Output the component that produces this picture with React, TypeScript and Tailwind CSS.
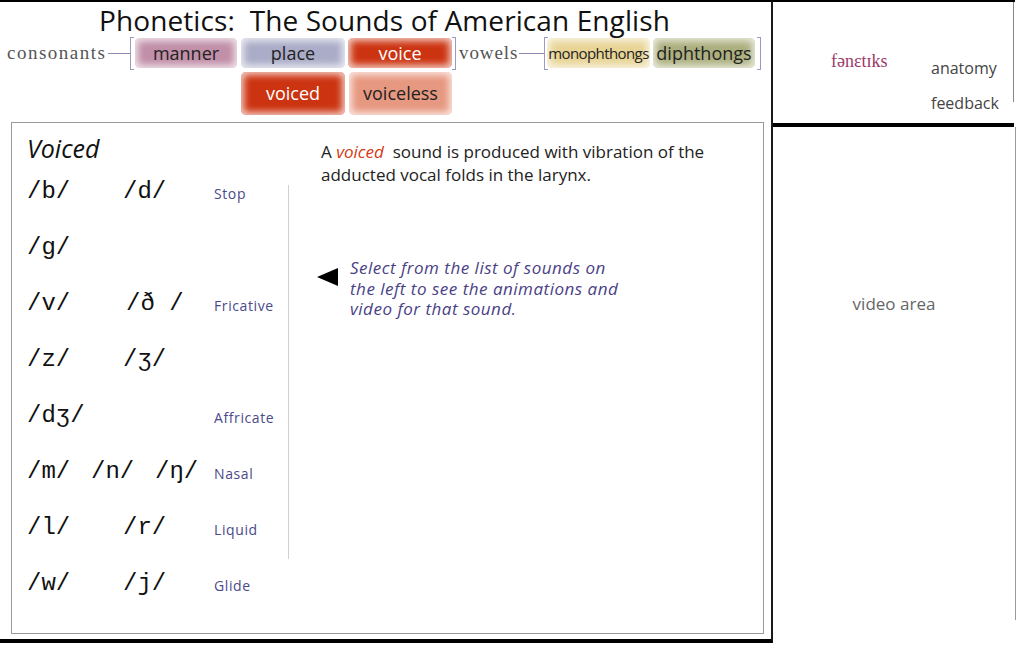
import { ReactNode } from 'react'

const sans = "font-['Open_Sans','DejaVu_Sans',sans-serif]"
const mono = "font-['Liberation_Mono','DejaVu_Sans_Mono',monospace]"
const serif = "font-['Liberation_Serif','DejaVu_Serif',serif]"

function Pill({ children, className }: { children: ReactNode; className: string }) {
  return (
    <div
      className={`flex items-center justify-center rounded-[5px] shadow-[inset_0_0_7px_3px_rgba(255,255,255,0.75)] ${className}`}
    >
      {children}
    </div>
  )
}

function Bracket({ side }: { side: 'l' | 'r' }) {
  return (
    <div
      className={`w-[4px] h-[33px] border-t border-b border-[#9a9ac4] ${
        side === 'l' ? 'border-l' : 'border-r'
      }`}
    />
  )
}

const rows = [
  { items: [['/b/', 96], ['/d/', 91]], label: 'Stop' },
  { items: [['/g/', 187]], label: '' },
  { items: [['/v/', 99], ['/ð /', 88]], label: 'Fricative' },
  { items: [['/z/', 96], ['/ʒ/', 91]], label: '' },
  { items: [['/dʒ/', 187]], label: 'Affricate' },
  { items: [['/m/', 64], ['/n/', 64], ['/ŋ/', 59]], label: 'Nasal' },
  { items: [['/l/', 96], ['/r/', 91]], label: 'Liquid' },
  { items: [['/w/', 96], ['/j/', 91]], label: 'Glide' },
] as const

export default function App() {
  return (
    <div className={`w-[1024px] h-[656px] bg-white overflow-hidden flex ${sans}`}>
      {/* Left column */}
      <div className="w-[773px] h-[643px] flex flex-col border-t-2 border-black border-r-2 border-r-[#1a1a1a] border-b-4 border-b-black">
        {/* Header */}
        <div className="h-[118px] flex flex-col">
          <h1 className="h-[34px] pl-[99px] pt-[1px] text-[28px] leading-[34px] text-[#111] whitespace-pre tracking-[0.1px]">
            Phonetics:  The Sounds of American English
          </h1>
          <div className="flex items-center h-[34px]">
            <span className={`${serif} w-[108px] pl-[7px] text-[19px] text-[#555] tracking-[1.5px]`}>consonants</span>
            <div className="w-[22px] h-px bg-[#8a8ab0]" />
            <Bracket side="l" />
            <div className="flex ml-[1px]">
              <Pill className="w-[102px] h-[30px] bg-[#c18fa8] text-[18px] text-[#222]">manner</Pill>
              <Pill className="ml-[4px] w-[104px] h-[30px] bg-[#abadc8] text-[18px] text-[#222]">place</Pill>
              <Pill className="ml-[3px] w-[104px] h-[30px] bg-[#cc3411] text-[18px] text-white shadow-[inset_0_0_6px_2px_rgba(255,255,255,0.55)]">voice</Pill>
            </div>
            <Bracket side="r" />
            <span className={`${serif} w-[63px] pl-[3px] text-[19px] text-[#555] tracking-[0.9px]`}>vowels</span>
            <div className="w-[25px] h-px bg-[#8a8ab0]" />
            <Bracket side="l" />
            <div className="flex -ml-[1px]">
              <Pill className="w-[103px] h-[30px] bg-[#e8d596] text-[15px] text-[#222] tracking-[-0.6px]">monophthongs</Pill>
              <Pill className="ml-[3px] w-[102px] h-[30px] bg-[#acb07f] text-[18px] text-[#222]">diphthongs</Pill>
            </div>
            <div className="ml-[2px]">
              <Bracket side="r" />
            </div>
          </div>
          <div className="flex gap-[4px] pl-[241px] pt-[2px]">
            <Pill className="w-[104px] h-[43px] bg-[#cc3411] text-[18px] text-white shadow-[inset_0_0_6px_2px_rgba(255,255,255,0.55)]">voiced</Pill>
            <Pill className="w-[103px] h-[43px] bg-[#e79880] text-[18px] text-[#222]">voiceless</Pill>
          </div>
        </div>

        {/* Content panel */}
        <div className="ml-[11px] mt-[2px] w-[753px] h-[512px] border border-[#9a9a9a] flex">
          <div className="w-[276px] flex flex-col pl-[15px] pt-[9px]">
            <div className="text-[25px] italic text-[#111] leading-[32px] h-[32px]">Voiced</div>
            <div className="flex flex-col">
              {rows.map((r, i) => (
                <div key={i} className="flex items-center h-[56px]">
                  {r.items.map(([t, w]) => (
                    <span key={t} style={{ width: w }} className={`${mono} text-[24px] text-[#111]`}>
                      {t}
                    </span>
                  ))}
                  <span className="text-[14px] text-[#4a4a8a] tracking-[0.6px] pt-[3px]">{r.label}</span>
                </div>
              ))}
            </div>
          </div>
          <div className="w-px h-[374px] mt-[62px] bg-[#d0d0d0]" />
          <div className="flex-1 pl-[32px] pt-[17px]">
            <p className="text-[17px] leading-[23px] text-[#222] w-[420px]">
              A <span className="italic text-[#d33a12]">voiced</span>&nbsp; sound is produced with vibration of the adducted vocal folds in the larynx.
            </p>
            <div className="flex mt-[72px] -ml-[4px]">
              <div className="w-[33px] pt-[10px]">
                <div className="w-0 h-0 border-y-[9px] border-y-transparent border-r-[21px] border-r-black" />
              </div>
              <p className="text-[17px] leading-[20.5px] italic text-[#4a3f86] tracking-[0.5px] w-[275px]">
                Select from the list of sounds on the left to see the animations and video for that sound.
              </p>
            </div>
          </div>
        </div>
      </div>

      {/* Right column */}
      <div className="w-[242px] flex flex-col">
        <div className="h-[123px] border-t-2 border-black flex">
          <div className="w-[241px] h-[100px] border-r border-[#888] relative">
            <span className={`${serif} absolute left-[58px] top-[46px] text-[18px] text-[#9c3a68]`}>fənɛtɪks</span>
            <span className="absolute left-[158px] top-[54px] text-[16px] text-[#444]">anatomy</span>
            <span className="absolute left-[158px] top-[89px] text-[16px] text-[#444]">feedback</span>
          </div>
        </div>
        <div className="h-[4px] bg-black w-[241px]" />
        <div className="w-[243px] h-[493px] border-r border-[#999] flex items-center justify-center pb-[140px]">
          <span className="text-[17px] text-[#666]">video area</span>
        </div>
      </div>
    </div>
  )
}
